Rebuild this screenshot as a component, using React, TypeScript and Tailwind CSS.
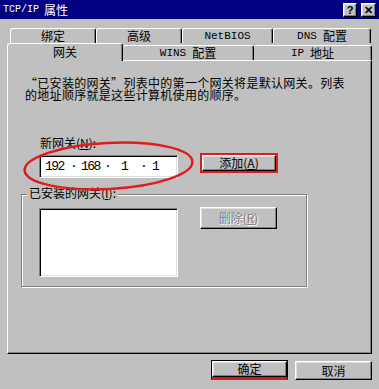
import React from "react";

const raised =
  "border border-t-white border-l-white border-r-black border-b-black shadow-[inset_-1px_-1px_0_#808080,inset_1px_1px_0_#dfdfdf] bg-[#c0c0c0]";
const sunken =
  "border border-t-[#808080] border-l-[#808080] border-b-white border-r-white shadow-[inset_1px_1px_0_#000,inset_-1px_-1px_0_#dfdfdf] bg-white";
const latin = "font-['Liberation_Mono',monospace] text-[11px]";

export default function App() {
  return (
    <div
      lang="zh-CN"
      className="relative w-[379px] h-[389px] overflow-hidden bg-[#c0c0c0] text-black font-['Noto_Sans_CJK_SC',sans-serif] text-[12px]"
    >
      {/* Title bar */}
      <div className="flex h-[19px] items-center bg-[#000080] pl-[3px] pr-[3px] text-white">
        <span className="font-['Liberation_Mono',monospace] text-[10px] leading-none">TCP/IP</span>
        <span className="ml-[5px] text-[12px] leading-none">属性</span>
        <div className="ml-auto flex gap-[4px] pt-[1px]">
          <div className={`${raised} flex h-[14px] w-[14px] items-center justify-center text-[11px] font-bold leading-none text-black font-['Liberation_Sans',sans-serif]`}>
            ?
          </div>
          <div className={`${raised} flex h-[14px] w-[15px] items-center justify-center text-[11px] font-bold leading-none text-black font-['Liberation_Sans',sans-serif]`}>
            ✕
          </div>
        </div>
      </div>

      <div className="pl-[7px]">
        {/* Tab row 1 */}
        <div className="ml-[3px] mt-[9px] flex h-[15px]">
          <div className="flex h-full w-[86px] items-center justify-center rounded-t-[3px] border-l border-r border-t border-l-white border-r-black border-t-white leading-none shadow-[inset_-1px_0_0_#808080]">
            绑定
          </div>
          <div className="flex h-full w-[86px] items-center justify-center rounded-t-[3px] border-l border-r border-t border-l-white border-r-black border-t-white leading-none shadow-[inset_-1px_0_0_#808080]">
            高级
          </div>
          <div className="flex h-full w-[91px] items-center justify-center rounded-t-[3px] border-l border-r border-t border-l-white border-r-black border-t-white leading-none shadow-[inset_-1px_0_0_#808080]">
            <span className={latin}>NetBIOS</span>
          </div>
          <div className="flex h-full w-[98px] items-center justify-center rounded-t-[3px] border-l border-r border-t border-l-white border-r-black border-t-white leading-none shadow-[inset_-1px_0_0_#808080]">
            <span className={latin}>DNS</span>
            <span className="ml-[6px]">配置</span>
          </div>
        </div>

        {/* Tab row 2 */}
        <div className="flex h-[17px] items-end">
          <div className="relative z-10 mb-[-1px] flex h-[18px] w-[116px] items-center justify-center rounded-t-[3px] border-l border-r border-t border-l-white border-r-black border-t-white bg-[#c0c0c0] pb-[1px] leading-none shadow-[inset_-1px_0_0_#808080]">
            网关
          </div>
          <div className="flex h-[15px] w-[131px] items-center justify-center rounded-t-[3px] border-r border-t border-r-black border-t-white leading-none shadow-[inset_-1px_0_0_#808080]">
            <span className={latin}>WINS</span>
            <span className="ml-[6px]">配置</span>
          </div>
          <div className="flex h-[15px] w-[118px] items-center justify-center rounded-t-[3px] border-r border-t border-r-black border-t-white leading-none shadow-[inset_-1px_0_0_#808080]">
            <span className={latin}>IP</span>
            <span className="ml-[6px]">地址</span>
          </div>
        </div>

        {/* Panel */}
        <div className="flex h-[294px] w-[365px] flex-col border border-b-black border-l-white border-r-black border-t-white shadow-[inset_-1px_-1px_0_#808080]">
          <div className="ml-[17px] mt-[16px] text-[12px] leading-[12px] tracking-[0.3px]">
            “已安装的网关”列表中的第一个网关将是默认网关。列表
            <br />
            的地址顺序就是这些计算机使用的顺序。
          </div>

          <div className="ml-[32px] mt-[36px] leading-[12px]">
            新网关(<span className="underline">N</span>):
          </div>

          <div className="ml-[31px] mt-[6px] flex items-start">
            <div className={`${sunken} flex h-[23px] w-[139px] items-center pl-[5px] font-['Liberation_Mono',monospace] text-[13px] leading-none tracking-[-1.6px]`}>
              <span className="w-[25px]">192</span>
              <span className="w-[11px]">·</span>
              <span className="w-[23px]">168</span>
              <span className="w-[17px]">·</span>
              <span className="w-[19px]">1</span>
              <span className="w-[12px]">·</span>
              <span>1</span>
            </div>
            <div className="ml-[22px] mt-[-2px] h-[20px] w-[78px] border-2 border-[#d81e1e]">
              <div className={`${raised} flex h-full w-full items-center justify-center leading-none`}>
                添加(<span className="underline">A</span>)
              </div>
            </div>
          </div>

          <div className="relative ml-[13px] mt-[16px] h-[93px] w-[286px] border border-[#808080] shadow-[1px_1px_0_#fff,inset_1px_1px_0_#fff]">
            <div className="absolute left-[5px] top-[-8px] bg-[#c0c0c0] px-[2px] leading-[12px]">
              已安装的网关(<span className="underline">I</span>):
            </div>
            <div className="flex items-start">
              <div className={`${sunken} ml-[17px] mt-[13px] h-[69px] w-[139px]`} />
              <div className={`${raised} ml-[22px] mt-[12px] flex h-[22px] w-[77px] items-center justify-center leading-none text-[#808080] [text-shadow:1px_1px_0_#fff]`}>
                删除(<span className="underline">R</span>)
              </div>
            </div>
          </div>
        </div>

        {/* Bottom buttons */}
        <div className="mt-[6px] flex w-[365px] items-start justify-end gap-[7px]">
          <div className="h-[20px] w-[77px] border border-b-[3px] border-black border-b-[#c8201c]">
            <div className={`${raised} flex h-full w-full items-center justify-center leading-none`}>确定</div>
          </div>
          <div className={`${raised} mt-[1px] flex h-[19px] w-[77px] items-center justify-center leading-none`}>取消</div>
        </div>
      </div>

      {/* Red annotation ellipse */}
      <svg className="pointer-events-none absolute left-0 top-0" width="379" height="389">
        <ellipse
          cx="108.5"
          cy="166"
          rx="84"
          ry="23"
          fill="none"
          stroke="#e01c1c"
          strokeWidth="2.5"
          transform="rotate(-3 108.5 166)"
        />
      </svg>
    </div>
  );
}
